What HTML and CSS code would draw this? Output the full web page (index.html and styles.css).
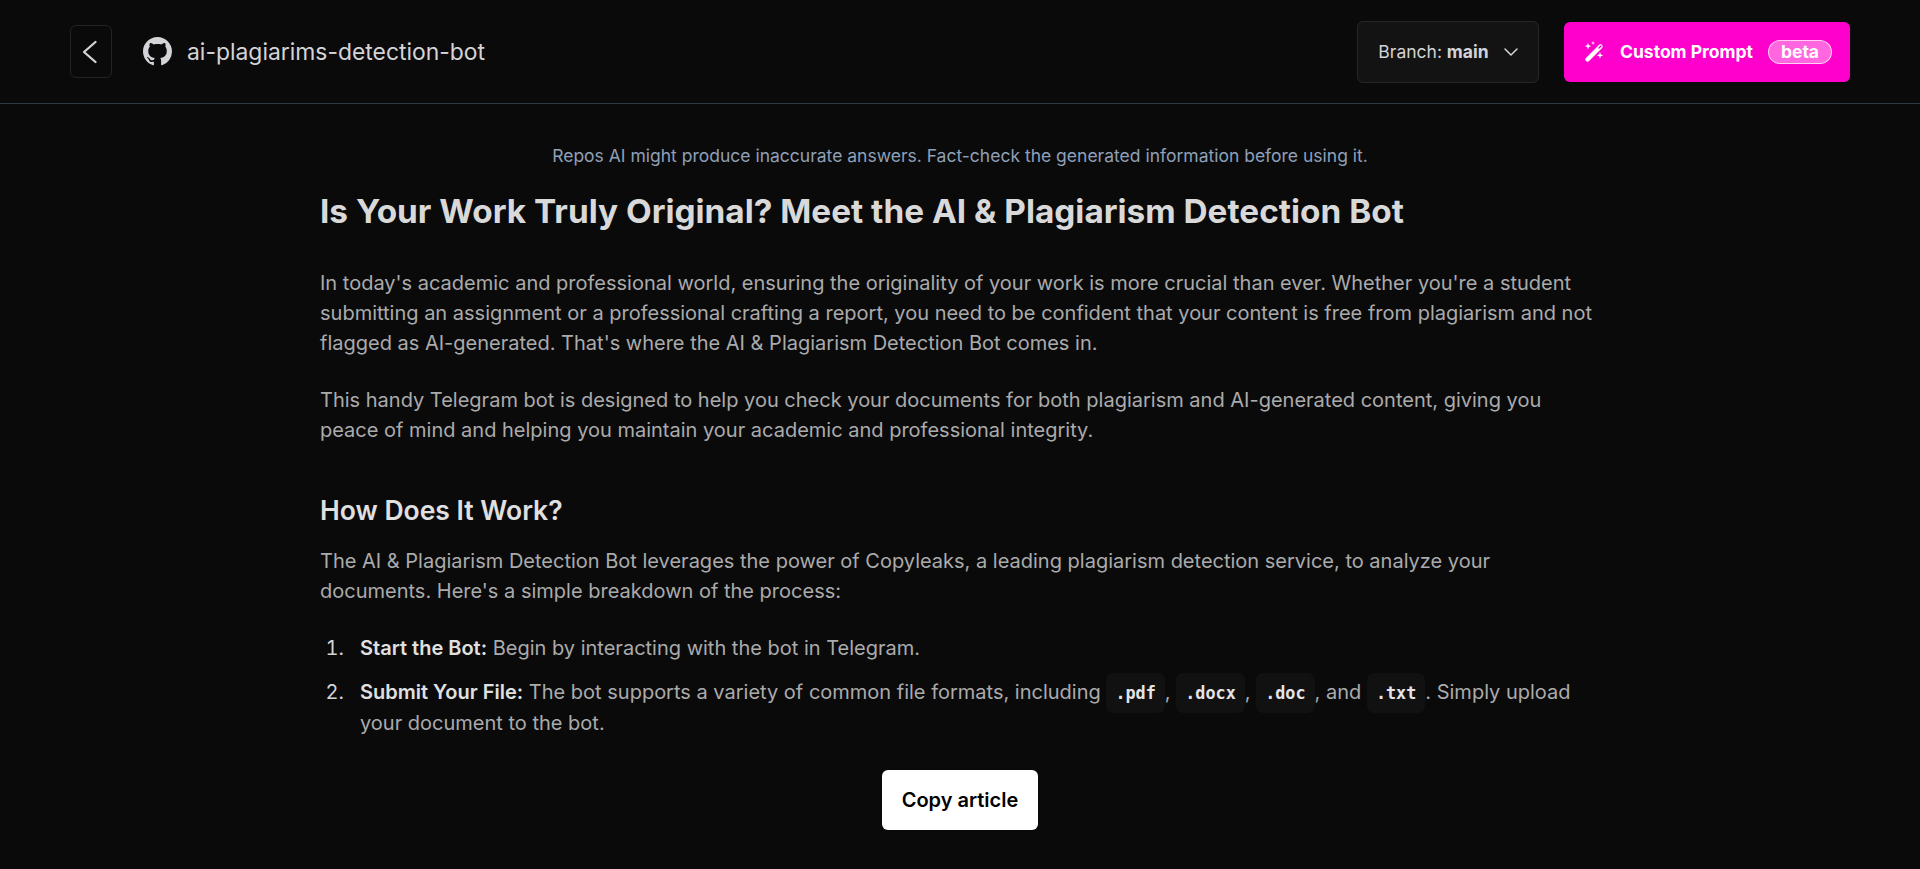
FILE: index.html
```html
<!DOCTYPE html>
<html lang="en">

<head>
  <meta charset="UTF-8">
  <meta name="viewport" content="width=device-width, initial-scale=1.0">
  <title>Repos AI</title>
  <link rel="stylesheet" href="styles.css">
</head>

<body>
  <header class="topbar">
    <div class="topbar-left">
      <button class="back-btn" title="Back">
        <svg width="24" height="24" viewBox="0 0 24 24" fill="none" stroke="currentColor" stroke-width="2.300" stroke-linecap="round" stroke-linejoin="round"><path d="M16.500 2 5 12l11.500 10"/></svg>
      </button>
      <svg class="gh-icon" width="29" height="29" viewBox="0 0 16 16" fill="currentColor"><path d="M8 0C3.58 0 0 3.58 0 8c0 3.54 2.29 6.53 5.47 7.59.4.07.55-.17.55-.38 0-.19-.01-.82-.01-1.49-2.01.37-2.53-.49-2.69-.94-.09-.23-.48-.94-.82-1.13-.28-.15-.68-.52-.01-.53.63-.01 1.08.58 1.23.82.72 1.21 1.87.87 2.33.66.07-.52.28-.87.51-1.07-1.78-.2-3.64-.89-3.64-3.95 0-.87.31-1.59.82-2.15-.08-.2-.36-1.02.08-2.12 0 0 .67-.21 2.2.82.64-.18 1.32-.27 2-.27s1.36.09 2 .27c1.53-1.04 2.2-.82 2.2-.82.44 1.1.16 1.92.08 2.12.51.56.82 1.27.82 2.15 0 3.07-1.87 3.75-3.65 3.95.29.25.54.73.54 1.48 0 1.07-.01 1.93-.01 2.2 0 .21.15.46.55.38A8.01 8.01 0 0 0 16 8c0-4.42-3.58-8-8-8z"/></svg>
      <span class="repo-name">ai-plagiarims-detection-bot</span>
    </div>
    <div class="topbar-right">
      <button class="branch-btn">
        <span>Branch: <b>main</b></span>
        <svg width="16" height="16" viewBox="0 0 16 16" fill="none" stroke="currentColor" stroke-width="1.500" stroke-linecap="round" stroke-linejoin="round"><path d="m2 5 6 6 6-6"/></svg>
      </button>
      <button class="prompt-btn">
        <svg class="wand" width="20" height="22" viewBox="0 0 20 22">
          <path d="M3.500 18.500 16.500 5.500" fill="none" stroke="#fff" stroke-width="4.500" stroke-linecap="round"/>
          <path d="m15 7 2-2" fill="none" stroke="#ff00cc" stroke-width="1.500" stroke-linecap="round"/>
          <path fill="#fff" d="m4 1.800.9 2.400 2.400.9-2.400.9L4 8.400l-.9-2.400L.7 5.100l2.400-.9zM16 11l.9 2.400 2.400.9-2.400.9-.9 2.400-.9-2.400-2.400-.9 2.400-.9zM9 0l.5 1.500L11 2l-1.500.5L9 4l-.5-1.500L7 2l1.500-.5z"/>
        </svg>
        <span>Custom Prompt</span>
        <span class="beta">beta</span>
      </button>
    </div>
  </header>

  <main class="content">
    <p class="disclaimer">Repos AI might produce inaccurate answers. Fact-check the generated information before using it.</p>
    <article class="article">
      <h1>Is Your Work Truly Original? Meet the AI &amp; Plagiarism Detection Bot</h1>
      <p>In today's academic and professional world, ensuring the originality of your work is more crucial than ever. Whether you're a student submitting an assignment or a professional crafting a report, you need to be confident that your content is free from plagiarism and not flagged as AI-generated. That's where the AI &amp; Plagiarism Detection Bot comes in.</p>
      <p>This handy Telegram bot is designed to help you check your documents for both plagiarism and AI-generated content, giving you peace of mind and helping you maintain your academic and professional integrity.</p>
      <h2>How Does It Work?</h2>
      <p>The AI &amp; Plagiarism Detection Bot leverages the power of Copyleaks, a leading plagiarism detection service, to analyze your documents. Here's a simple breakdown of the process:</p>
      <ol>
        <li><strong>Start the Bot:</strong> Begin by interacting with the bot in Telegram.</li>
        <li><strong>Submit Your File:</strong> The bot supports a variety of common file formats, including <code>.pdf</code>, <code>.docx</code>, <code>.doc</code>, and <code>.txt</code>. Simply upload your document to the bot.</li>
      </ol>
    </article>
  </main>

  <button class="copy-btn">Copy article</button>
</body>

</html>
```

FILE: styles.css
```css
html,
body {
  margin: 0;
  padding: 0;
  height: 100%;
  overflow: hidden;
  background-color: #0a0a0b;
  font-family: Inter, "Liberation Sans", sans-serif;
}

button {
  font-family: inherit;
  cursor: pointer;
}

.topbar {
  height: 103px;
  padding: 0 70px;
  display: flex;
  align-items: center;
  justify-content: space-between;
  border-bottom: 1px solid #2f3843;
}

.topbar-left,
.topbar-right {
  display: flex;
  align-items: center;
}

.back-btn {
  width: 42px;
  height: 53px;
  padding: 0;
  display: flex;
  align-items: center;
  justify-content: center;
  background: none;
  border: 1px solid #232326;
  border-radius: 6px;
  color: #d4d4d8;
}

.gh-icon {
  margin-left: 31px;
  color: #d4d4d8;
}

.repo-name {
  margin-left: 15px;
  font-size: 22.9px;
  color: #d4d4d8;
}

.branch-btn {
  height: 62px;
  width: 182px;
  display: flex;
  align-items: center;
  justify-content: center;
  gap: 14px;
  padding: 0 0 0 1px;
  background-color: #131314;
  border: 1px solid #262628;
  border-radius: 6px;
  color: #d4d4d8;
  font-size: 17.5px;
}

.prompt-btn {
  height: 60px;
  width: 286px;
  margin-left: 25px;
  display: flex;
  align-items: center;
  gap: 15px;
  padding: 0 0 0 20px;
  background-color: #ff00cc;
  border: none;
  border-radius: 6px;
  color: #fff;
  font-size: 17.5px;
  font-weight: 700;
}

.wand {
  margin-right: 1px;
}

.beta {
  padding: 0 12px;
  background-color: rgba(255, 255, 255, 0.4);
  border: 1px solid rgba(255, 255, 255, 0.7);
  border-radius: 12px;
  line-height: 22px;
}

.disclaimer {
  margin: 40px 0 0;
  text-align: center;
  font-size: 17.5px;
  line-height: 24px;
  color: #8fa0b8;
}

.article {
  width: 1280px;
  margin: 0 auto;
  font-size: 20px;
  line-height: 30px;
  color: #ababab;
}

.article h1 {
  margin: 23px 0 37px;
  font-size: 33.33px;
  line-height: 40px;
  font-weight: 700;
  color: #d9d9d9;
}

.article h2 {
  margin: 47px 0 18px;
  font-size: 26.5px;
  line-height: 36px;
  font-weight: 600;
  color: #e0e0e0;
}

.article p {
  margin: 0 0 27px;
}

.article ol {
  margin: 0;
  padding-left: 40px;
}

.article li {
  margin-bottom: 14px;
}

.article li::marker {
  content: counter(list-item) ".\00a0\00a0\00a0";
  color: #d4d4d8;
}

.article strong {
  font-weight: 600;
  color: #e0e0e0;
}

.article code {
  padding: 10px 9px;
  background-color: #111112;
  border-radius: 7px;
  font-family: "DejaVu Sans Mono", monospace;
  font-size: 16.8px;
  font-weight: 700;
  color: #e4e4e7;
}

.copy-btn {
  position: fixed;
  left: 882px;
  top: 770px;
  width: 156px;
  height: 60px;
  background-color: #fff;
  border: none;
  border-radius: 6px;
  color: #000;
  font-size: 20px;
  font-weight: 600;
}
```
